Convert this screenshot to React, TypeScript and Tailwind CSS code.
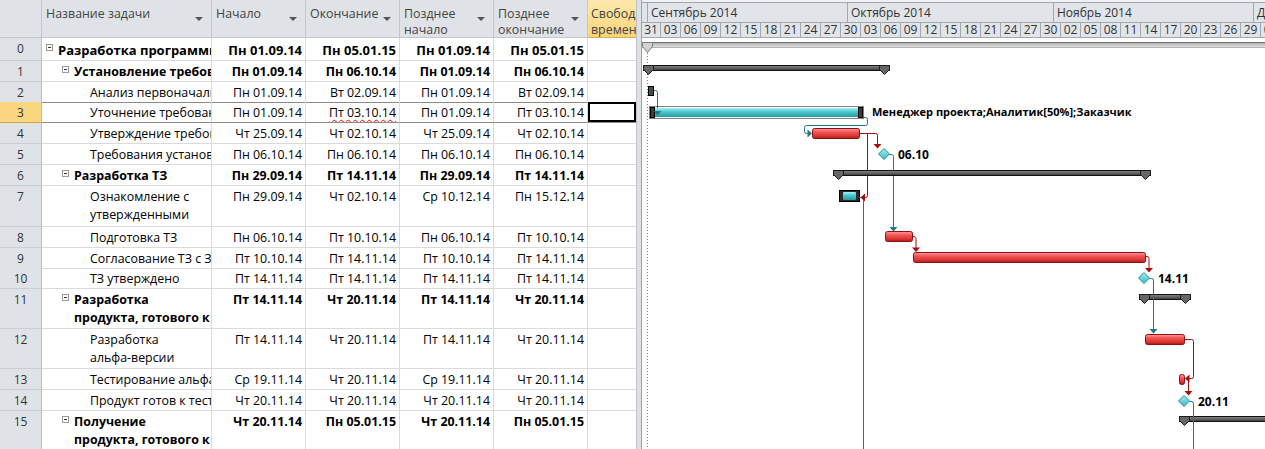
import React from 'react';

type Row = {
  n: number;
  h: string;
  level: 0 | 1 | 2;
  lines: string[];
  dates: string[];
  bold?: boolean;
  big?: boolean;
  selected?: boolean;
  above?: boolean;
};

const rows: Row[] = [
  { n: 0, h: 'h-[23px]', level: 0, bold: true, big: true, lines: ['Разработка программного продукта'], dates: ['Пн 01.09.14', 'Пн 05.01.15', 'Пн 01.09.14', 'Пн 05.01.15'] },
  { n: 1, h: 'h-[21px]', level: 1, bold: true, lines: ['Установление требований'], dates: ['Пн 01.09.14', 'Пн 06.10.14', 'Пн 01.09.14', 'Пн 06.10.14'] },
  { n: 2, h: 'h-[20px]', level: 2, above: true, lines: ['Анализ первоначальных требований'], dates: ['Пн 01.09.14', 'Вт 02.09.14', 'Пн 01.09.14', 'Вт 02.09.14'] },
  { n: 3, h: 'h-[21px]', level: 2, selected: true, lines: ['Уточнение требований'], dates: ['Пн 01.09.14', 'Пт 03.10.14', 'Пн 01.09.14', 'Пт 03.10.14'] },
  { n: 4, h: 'h-[21px]', level: 2, lines: ['Утверждение требований'], dates: ['Чт 25.09.14', 'Чт 02.10.14', 'Чт 25.09.14', 'Чт 02.10.14'] },
  { n: 5, h: 'h-[21px]', level: 2, lines: ['Требования установлены'], dates: ['Пн 06.10.14', 'Пн 06.10.14', 'Пн 06.10.14', 'Пн 06.10.14'] },
  { n: 6, h: 'h-[21px]', level: 1, bold: true, lines: ['Разработка ТЗ'], dates: ['Пн 29.09.14', 'Пт 14.11.14', 'Пн 29.09.14', 'Пт 14.11.14'] },
  { n: 7, h: 'h-[41px]', level: 2, lines: ['Ознакомление с', 'утвержденными'], dates: ['Пн 29.09.14', 'Чт 02.10.14', 'Ср 10.12.14', 'Пн 15.12.14'] },
  { n: 8, h: 'h-[21px]', level: 2, lines: ['Подготовка ТЗ'], dates: ['Пн 06.10.14', 'Пт 10.10.14', 'Пн 06.10.14', 'Пт 10.10.14'] },
  { n: 9, h: 'h-[20px]', level: 2, lines: ['Согласование ТЗ с Заказчиком'], dates: ['Пт 10.10.14', 'Пт 14.11.14', 'Пт 10.10.14', 'Пт 14.11.14'] },
  { n: 10, h: 'h-[21px]', level: 2, lines: ['ТЗ утверждено'], dates: ['Пт 14.11.14', 'Пт 14.11.14', 'Пт 14.11.14', 'Пт 14.11.14'] },
  { n: 11, h: 'h-[40px]', level: 1, bold: true, lines: ['Разработка', 'продукта, готового к'], dates: ['Пт 14.11.14', 'Чт 20.11.14', 'Пт 14.11.14', 'Чт 20.11.14'] },
  { n: 12, h: 'h-[40px]', level: 2, lines: ['Разработка', 'альфа-версии'], dates: ['Пт 14.11.14', 'Чт 20.11.14', 'Пт 14.11.14', 'Чт 20.11.14'] },
  { n: 13, h: 'h-[21px]', level: 2, lines: ['Тестирование альфа-версии'], dates: ['Ср 19.11.14', 'Чт 20.11.14', 'Ср 19.11.14', 'Чт 20.11.14'] },
  { n: 14, h: 'h-[21px]', level: 2, lines: ['Продукт готов к тестированию'], dates: ['Чт 20.11.14', 'Чт 20.11.14', 'Чт 20.11.14', 'Чт 20.11.14'] },
  { n: 15, h: 'h-[40px]', level: 1, bold: true, lines: ['Получение', 'продукта, готового к'], dates: ['Чт 20.11.14', 'Пн 05.01.15', 'Чт 20.11.14', 'Пн 05.01.15'] },
];

const days = ['31', '03', '06', '09', '12', '15', '18', '21', '24', '27', '30', '03', '06', '09', '12', '15', '18', '21', '24', '27', '30', '02', '05', '08', '11', '14', '17', '20', '23', '26', '29', '02'];

const GRID = 'grid grid-cols-[42px_170px_94px_94px_94px_94px_48px]';

const DropArrow = () => (
  <span className="h-0 w-0 shrink-0 border-x-[4px] border-t-[4px] border-x-transparent border-t-[#555]" />
);

function HeaderCell({ lines, arrow = true }: { lines: string[]; arrow?: boolean }) {
  return (
    <div className="flex items-center justify-between overflow-hidden border-r border-b border-[#c3c8cf] pl-[4px] pr-[8px]">
      <div className="self-start whitespace-nowrap pt-[6px] text-[12.4px] leading-[16px] text-[#444]">
        {lines.map((l) => (
          <div key={l}>{l}</div>
        ))}
      </div>
      {arrow && <DropArrow />}
    </div>
  );
}

const MinusBox = ({ big }: { big?: boolean }) => (
  <span
    className={`mr-[5px] flex h-[7px] w-[7px] shrink-0 items-center justify-center border border-[#9a9a9a] bg-white ${
      big ? 'mt-[6px]' : 'mt-[5px]'
    }`}
  >
    <span className="h-px w-[3px] bg-[#333]" />
  </span>
);

function TaskRow({ row }: { row: Row }) {
  const line = row.above || row.selected ? 'border-b-[#8a8a8a]' : 'border-b-[#dadada]';
  const size = row.big ? 'text-[13px] pt-[3px]' : 'text-[12.4px] pt-[2px]';
  const weight = row.bold ? 'font-bold' : 'font-normal';
  const indent = row.level === 0 ? 'pl-[4px]' : row.level === 1 ? 'pl-[20px]' : 'pl-[48px]';
  return (
    <div className={`${GRID} ${row.h}`}>
      <div
        className={`border-r border-b border-r-[#b9bec6] pt-[2px] text-center text-[12px] leading-[18px] text-[#333] ${
          row.selected ? 'border-b-[#d3a53e] bg-[#fbd680]' : row.above ? 'border-b-[#d3a53e] bg-[#dfe3e8]' : 'border-b-[#c9ced4] bg-[#dfe3e8]'
        }`}
      >
        {row.n}
      </div>
      <div className={`flex items-start overflow-hidden border-r border-b border-r-[#dadada] ${line} ${indent}`}>
        {row.level < 2 && row.bold && <MinusBox big={row.big} />}
        <div className={`flex flex-col whitespace-nowrap leading-[18px] text-black ${size} ${weight}`}>
          {row.lines.map((l) => (
            <span key={l}>{l}</span>
          ))}
        </div>
      </div>
      {row.dates.map((d, i) => (
        <div
          key={i}
          className={`overflow-hidden whitespace-nowrap border-r border-b border-r-[#dadada] pr-[3px] text-right leading-[18px] text-black ${line} ${size} ${weight}`}
        >
          {row.selected && i === 1 ? (
            <span className="underline decoration-[#ff0000] decoration-wavy decoration-1 underline-offset-[2px]">{d}</span>
          ) : (
            d
          )}
        </div>
      ))}
      <div className={`border-b ${line} ${row.selected ? 'shadow-[inset_0_0_0_2px_#000]' : ''}`} />
    </div>
  );
}

const tri = (x: number, y: number) =>
  `${x + 0.5},${y + 0.5} ${x + 10.5},${y + 0.5} ${x + 10.5},${y + 4.5} ${x + 5.5},${y + 9.5} ${x + 0.5},${y + 4.5}`;

function Summary({ x1, x2, y, right = true }: { x1: number; x2: number; y: number; right?: boolean }) {
  return (
    <g>
      <rect x={x1 + 0.5} y={y + 0.5} width={x2 - x1 - 1} height={5} fill="url(#sum)" stroke="#111" />
      <polygon points={tri(x1, y)} fill="#666" stroke="#1c1c1c" />
      {right && <polygon points={tri(x2 - 11, y)} fill="#666" stroke="#1c1c1c" />}
    </g>
  );
}

function Bar({ x1, x2, y, h = 10 }: { x1: number; x2: number; y: number; h?: number }) {
  return <rect x={x1 + 0.5} y={y + 0.5} width={x2 - x1} height={h} rx={2} fill="url(#red)" stroke="#8e1111" />;
}

function Milestone({ x, y }: { x: number; y: number }) {
  return (
    <polygon
      points={`${x},${y - 5.5} ${x + 5.5},${y} ${x},${y + 5.5} ${x - 5.5},${y}`}
      fill="url(#dia)"
      stroke="#2b8d95"
    />
  );
}

const TEAL = '#1c7c82';
const RED = '#a30f0f';
const down = (x: number, y: number) => `${x - 4},${y} ${x + 4},${y} ${x},${y + 4.5}`;

function Chart() {
  const label = { fontFamily: "'Open Sans', sans-serif", fontWeight: 700 } as const;
  return (
    <svg className="absolute left-0 top-0" width={623} height={449} viewBox="642 0 623 449">
      <defs>
        <linearGradient id="red" x1="0" y1="0" x2="0" y2="1">
          <stop offset="0" stopColor="#ff9c9c" />
          <stop offset="0.35" stopColor="#f25656" />
          <stop offset="0.75" stopColor="#dc3434" />
          <stop offset="1" stopColor="#a81a1a" />
        </linearGradient>
        <linearGradient id="cyan" x1="0" y1="0" x2="0" y2="1">
          <stop offset="0" stopColor="#a8f0f3" />
          <stop offset="0.4" stopColor="#4ccbd2" />
          <stop offset="1" stopColor="#2797a0" />
        </linearGradient>
        <linearGradient id="dia" x1="0" y1="0" x2="0" y2="1">
          <stop offset="0" stopColor="#a6eef2" />
          <stop offset="1" stopColor="#38b9c1" />
        </linearGradient>
        <linearGradient id="sum" x1="0" y1="0" x2="0" y2="1">
          <stop offset="0" stopColor="#8a8a8a" />
          <stop offset="1" stopColor="#3a3a3a" />
        </linearGradient>
        <linearGradient id="proj" x1="0" y1="0" x2="0" y2="1">
          <stop offset="0" stopColor="#a9a9a9" />
          <stop offset="1" stopColor="#e9e9e9" />
        </linearGradient>
      </defs>

      {/* project start line */}
      <line x1={647.5} y1={50} x2={647.5} y2={449} stroke="#7a7a7a" strokeDasharray="1 2" />

      {/* row 0: project summary */}
      <rect x={642} y={42} width={623} height={6} fill="url(#proj)" />
      <line x1={642} y1={42.5} x2={1265} y2={42.5} stroke="#6f6f6f" />
      <line x1={642} y1={47.5} x2={1265} y2={47.5} stroke="#b5b5b5" />
      <polygon points="642.5,42.5 652.5,42.5 652.5,46.5 647.5,52.5 642.5,46.5" fill="#d2d2d2" stroke="#7d7d7d" />

      {/* row 1 */}
      <Summary x1={643} x2={890} y={65} />

      {/* row 2 */}
      <rect x={648.5} y={86.5} width={5} height={9} fill="#4a4a4a" stroke="#000" />
      <path d={`M654,90.5 H655.5 Q657.5,90.5 657.5,92.5 V111`} fill="none" stroke={TEAL} />

      {/* row 3 selected */}
      <rect x={649.5} y={106.5} width={214} height={12} fill="none" stroke="#000" strokeDasharray="1 1" />
      <rect x={652} y={108} width={209} height={9} fill="url(#cyan)" />
      <rect x={650.5} y={107.5} width={4} height={10} fill="#3a3a3a" stroke="#000" />
      <rect x={858.5} y={107.5} width={4} height={10} fill="#3a3a3a" stroke="#000" />
      <polygon points={down(657.5, 111)} fill={TEAL} />
      <text x={872} y={116} fontSize={11} fill="#000" style={label}>
        Менеджер проекта;Аналитик[50%];Заказчик
      </text>

      {/* link 3 -> 4 */}
      <path
        d="M863,117.5 H865.5 Q867.5,117.5 867.5,119.5 V123.5 Q867.5,125.5 865.5,125.5 H806.5 Q804.5,125.5 804.5,127.5 V131.5 Q804.5,133.5 806.5,133.5 H808"
        fill="none"
        stroke={TEAL}
      />
      <polygon points="807.5,129.5 812,133.5 807.5,137.5" fill={TEAL} />

      {/* row 4 */}
      <Bar x1={812} x2={859} y={128} />
      <path d="M859.5,133.5 H875.5 Q877.5,133.5 877.5,135.5 V145" fill="none" stroke={RED} />
      <polygon points={down(877.5, 144)} fill={RED} />
      <path d="M867.5,133.5 V195.5 Q867.5,197.5 865.5,197.5 H864" fill="none" stroke={RED} />

      {/* row 5 milestone */}
      <Milestone x={884} y={154} />
      <text x={898} y={158.5} fontSize={12} fill="#000" style={label}>
        06.10
      </text>
      <path d="M889.5,154.5 H891.5 Q893.5,154.5 893.5,156.5 V227" fill="none" stroke={TEAL} />
      <polygon points={down(893.5, 227)} fill={TEAL} />

      {/* row 6 */}
      <Summary x1={833} x2={1151} y={170} />

      {/* row 7 */}
      <rect x={839.5} y={190.5} width={20} height={11} fill="#2b2b2b" stroke="#000" />
      <rect x={843} y={192} width={13} height={8} rx={1} fill="url(#cyan)" />
      <path d="M859,197.5 H861.5 Q863.5,197.5 863.5,199.5 V449" fill="none" stroke={TEAL} />
      <polygon points="865,193.5 860.5,197.5 865,201.5" fill={RED} />

      {/* row 8 */}
      <Bar x1={885} x2={912} y={231} />
      <path d="M912.5,236.5 H914 Q916,236.5 916,238.5 V248" fill="none" stroke={RED} />
      <polygon points={down(916, 247.5)} fill={RED} />

      {/* row 9 */}
      <Bar x1={913} x2={1145} y={252} />
      <path d="M1145.5,256.5 H1147 Q1149,256.5 1149,258.5 V268" fill="none" stroke={RED} />
      <polygon points={down(1149, 268)} fill={RED} />

      {/* row 10 milestone */}
      <Milestone x={1144} y={278} />
      <text x={1158} y={282.5} fontSize={12} fill="#000" style={label}>
        14.11
      </text>
      <path d="M1149.5,278.5 H1151.5 Q1153.5,278.5 1153.5,280.5 V329" fill="none" stroke={TEAL} />

      {/* row 11 */}
      <Summary x1={1139} x2={1191} y={294} />
      <line x1={1153.5} y1={292} x2={1153.5} y2={330} stroke={TEAL} />
      <polygon points={down(1153.5, 329)} fill={TEAL} />

      {/* row 12 */}
      <Bar x1={1145} x2={1184} y={334} />
      <path d="M1184.5,339.5 H1191.5 Q1193.5,339.5 1193.5,341.5 V376.5 Q1193.5,378.5 1191.5,378.5 H1189" fill="none" stroke={RED} />
      <polygon points="1189.5,374.5 1185,378.5 1189.5,382.5" fill={RED} />

      {/* row 13 */}
      <rect x={1179.5} y={374.5} width={5} height={10} rx={2} fill="url(#red)" stroke="#8e1111" />
      <line x1={1188.5} y1={378} x2={1188.5} y2={392} stroke={RED} />
      <polygon points={down(1188.5, 391)} fill={RED} />

      {/* row 14 milestone */}
      <Milestone x={1184} y={401} />
      <text x={1198} y={405.5} fontSize={12} fill="#000" style={label}>
        20.11
      </text>

      {/* row 15 */}
      <Summary x1={1179} x2={1290} y={416} right={false} />
      <path d="M1189.5,401.5 H1191.5 Q1193.5,401.5 1193.5,403.5 V449" fill="none" stroke={TEAL} />
    </svg>
  );
}

function Timescale() {
  return (
    <div className="flex h-[38px] flex-col border-b border-[#a3a8af] bg-[#e1e4e9] text-[12px] text-[#333]">
      <div className="h-[3px] border-b border-[#a3a8af] bg-[#eef0f3]" />
      <div className="flex h-[20px] border-b border-[#a3a8af] leading-[19px]">
        <div className="w-[6px] border-r border-[#a3a8af]" />
        <div className="w-[200px] border-r border-[#a3a8af] pl-[3px]">Сентябрь 2014</div>
        <div className="w-[206px] border-r border-[#a3a8af] pl-[3px]">Октябрь 2014</div>
        <div className="w-[200px] border-r border-[#a3a8af] pl-[3px]">Ноябрь 2014</div>
        <div className="flex-1 whitespace-nowrap pl-[3px]">Декабрь 2014</div>
      </div>
      <div className="flex flex-1 leading-[14px]">
        {days.map((d, i) => (
          <div
            key={i}
            className={`shrink-0 border-r border-[#a3a8af] text-center ${i === 0 ? 'w-[19px]' : 'w-[20px]'}`}
          >
            {d}
          </div>
        ))}
      </div>
    </div>
  );
}

export default function App() {
  return (
    <div className="flex h-[449px] w-[1265px] overflow-hidden bg-white font-['Open_Sans',sans-serif]">
      <div className="w-[636px] shrink-0">
        <div className={`${GRID} h-[38px] bg-[#dfe3e8]`}>
          <div className="border-r border-b border-[#c3c8cf]" />
          <HeaderCell lines={['Название задачи']} />
          <HeaderCell lines={['Начало']} />
          <HeaderCell lines={['Окончание']} />
          <HeaderCell lines={['Позднее', 'начало']} />
          <HeaderCell lines={['Позднее', 'окончание']} />
          <div className="overflow-hidden whitespace-nowrap border-b border-[#d8b255] bg-gradient-to-b from-[#fde9ad] to-[#fbd479] pl-[3px] pt-[6px] text-[12.4px] leading-[16px] text-[#444]">
            <div>Свободный</div>
            <div>временной</div>
          </div>
        </div>
        {rows.map((r) => (
          <TaskRow key={r.n} row={r} />
        ))}
      </div>
      <div className="w-[6px] shrink-0 border-l border-r border-l-[#bfc4cb] border-r-[#9ca2aa] bg-[#dde0e5]" />
      <div className="relative flex-1">
        <Timescale />
        <Chart />
      </div>
    </div>
  );
}
